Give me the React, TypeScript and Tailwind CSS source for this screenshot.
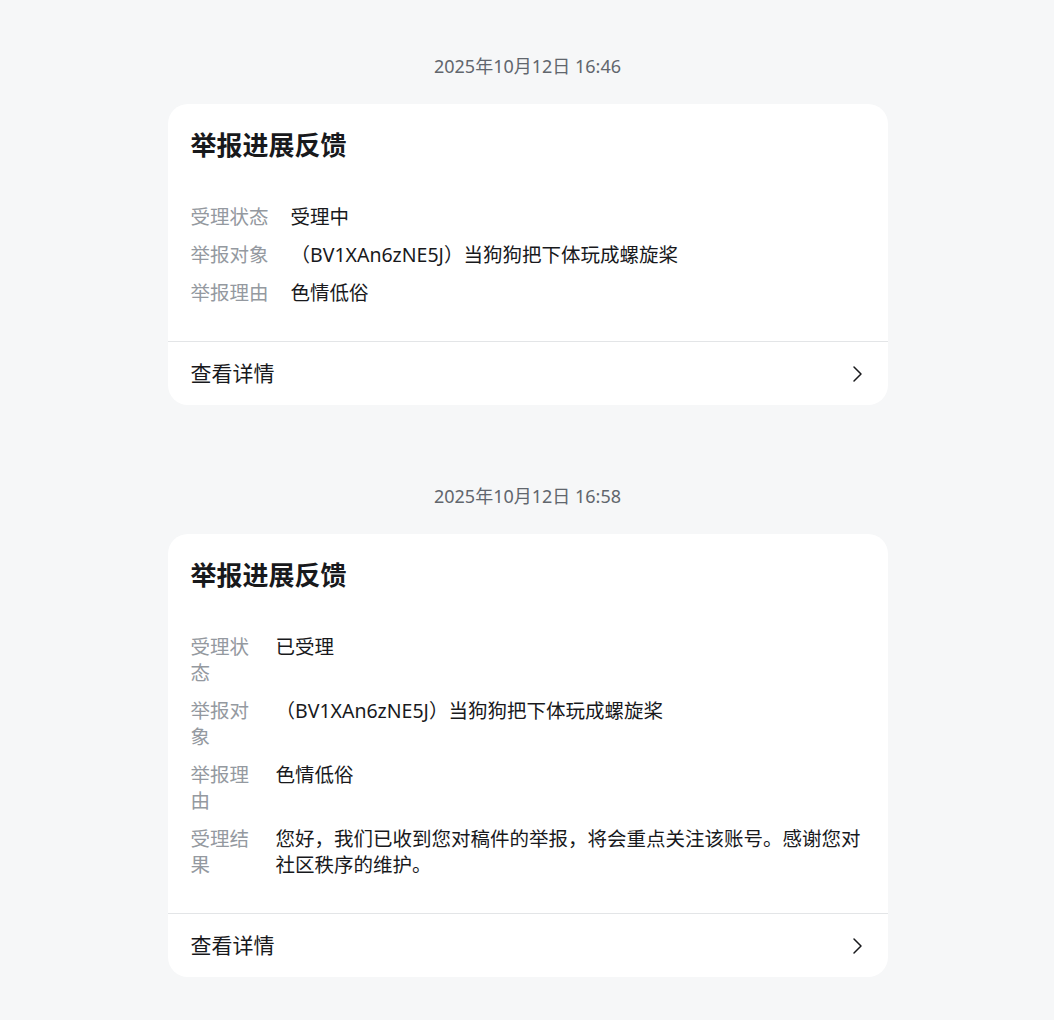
import React from "react";

interface Row {
    label: string;
    value: string;
}

interface Report {
    time: string;
    labelWidth: string;
    rows: Row[];
}

const reports: Report[] = [
    {
        time: "2025年10月12日 16:46",
        labelWidth: "w-[78px]",
        rows: [
            { label: "受理状态", value: "受理中" },
            { label: "举报对象", value: "（BV1XAn6zNE5J）当狗狗把下体玩成螺旋桨" },
            { label: "举报理由", value: "色情低俗" },
        ],
    },
    {
        time: "2025年10月12日 16:58",
        labelWidth: "w-[63px]",
        rows: [
            { label: "受理状态", value: "已受理" },
            { label: "举报对象", value: "（BV1XAn6zNE5J）当狗狗把下体玩成螺旋桨" },
            { label: "举报理由", value: "色情低俗" },
            { label: "受理结果", value: "您好，我们已收到您对稿件的举报，将会重点关注该账号。感谢您对社区秩序的维护。" },
        ],
    },
];

function Chevron() {
    return (
        <svg width="14" height="18" viewBox="0 0 14 18" fill="none" className="text-[#18191c]">
            <path d="M4 2 L11 9 L4 16" stroke="currentColor" strokeWidth="1.5" strokeLinecap="round" strokeLinejoin="round" />
        </svg>
    );
}

function ReportCard({ report }: { report: Report }) {
    return (
        <div className="flex flex-col items-center">
            <div className="h-[26px] text-[18px] leading-[26px] text-[#61666d]">{report.time}</div>
            <div className="mt-[25px] w-[720px] rounded-[20px] bg-white">
                <div className="px-[23px] pt-[24px] pb-[35px]">
                    <h2 className="text-[26px] font-bold leading-[34px] text-[#18191c]">举报进展反馈</h2>
                    <div className="mt-[42px] flex flex-col gap-[12px]">
                        {report.rows.map((row) => (
                            <div key={row.label} className="flex gap-[22px] text-[19.5px] leading-[26px]">
                                <div className={`${report.labelWidth} shrink-0 text-[#9499a0]`}>{row.label}</div>
                                <div className="min-w-0 flex-1 text-[#18191c]">{row.value}</div>
                            </div>
                        ))}
                    </div>
                </div>
                <div className="flex h-[64px] items-center justify-between border-t border-[#e3e5e7] pl-[23px] pr-[24px]">
                    <span className="text-[21px] text-[#18191c]">查看详情</span>
                    <Chevron />
                </div>
            </div>
        </div>
    );
}

export default function App() {
    return (
        <div
            className="min-h-[1020px] bg-[#f6f7f8] pt-[53px] pb-[45px] pl-[1px]"
            style={{ fontFamily: '"Noto Sans", "Noto Sans CJK SC", sans-serif' }}
        >
            <div className="flex flex-col gap-[78px]">
                {reports.map((r) => (
                    <ReportCard key={r.time} report={r} />
                ))}
            </div>
        </div>
    );
}
